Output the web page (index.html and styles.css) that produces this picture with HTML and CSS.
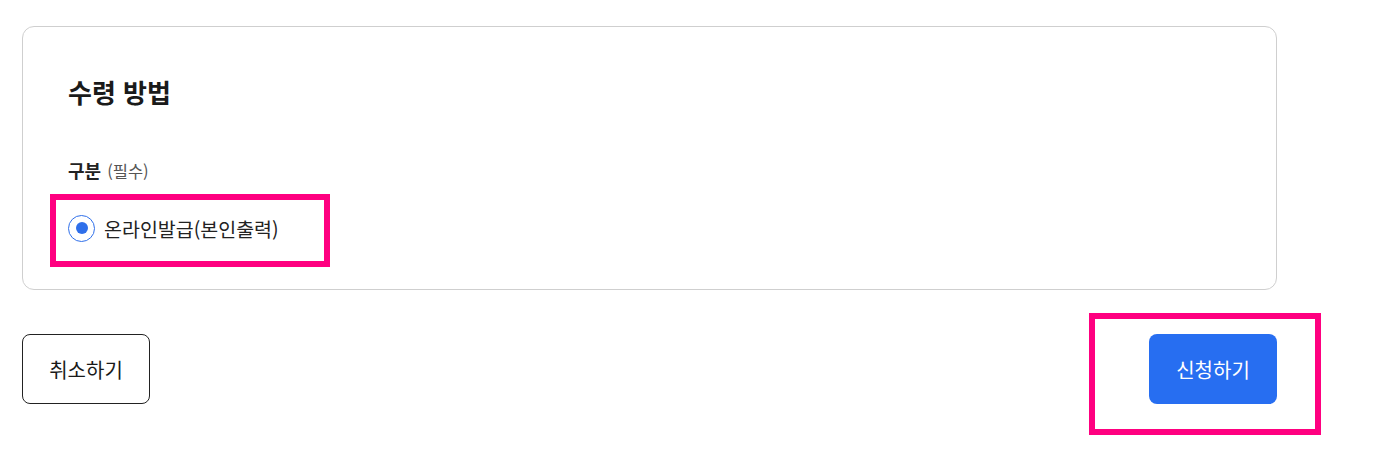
FILE: index.html
```html
<!DOCTYPE html>
<html lang="ko">
<head>
<meta charset="utf-8">
<link rel="stylesheet" href="styles.css">
</head>
<body>
<div class="page">
  <section class="card">
    <h2 class="card-title">수령 방법</h2>
    <div class="field-label">구분 <span class="req">(필수)</span></div>
    <div class="radio-wrap">
      <label class="radio">
        <span class="radio-circle"><span class="radio-dot"></span></span>
        <span class="radio-text">온라인발급(본인출력)</span>
      </label>
      <div class="mark mark-radio"></div>
    </div>
  </section>
  <div class="actions">
    <button class="btn btn-cancel">취소하기</button>
    <div class="submit-wrap">
      <button class="btn btn-submit">신청하기</button>
      <div class="mark mark-submit"></div>
    </div>
  </div>
</div>
</body>
</html>
```
FILE: styles.css
```css
* { box-sizing: border-box; }
html, body { margin: 0; padding: 0; background: #fff; }
body {
  font-family: "Noto Sans CJK KR", "Noto Sans", sans-serif;
  color: #1a1a1a;
  min-height: 463px;
}
.page {
  width: 1255px;
  margin-left: 22px;
  padding-top: 26px;
  padding-bottom: 40px;
}
.card {
  border: 1px solid #cfcfcf;
  border-radius: 12px;
  padding: 47px 45px 47px;
  display: flex;
  flex-direction: column;
  align-items: flex-start;
}
.card-title {
  margin: 0;
  font-size: 26px;
  line-height: 36px;
  font-weight: 700;
  color: #1a1a1a;
}
.field-label {
  margin-top: 47px;
  font-size: 18px;
  line-height: 26px;
  font-weight: 700;
  color: #222;
}
.req {
  font-size: 16.5px;
  font-weight: 400;
  color: #555;
  margin-left: 1px;
}
.radio-wrap {
  position: relative;
  margin-top: 30px;
}
.radio {
  display: flex;
  align-items: center;
  gap: 9px;
  height: 28px;
}
.radio-circle {
  width: 27px;
  height: 27px;
  border: 1.5px solid #2f6fea;
  border-radius: 50%;
  display: flex;
  align-items: center;
  justify-content: center;
}
.radio-dot {
  width: 12px;
  height: 12px;
  border-radius: 50%;
  background: #2f6fea;
}
.radio-text {
  font-size: 19.5px;
  color: #222;
}
.mark {
  position: absolute;
  border: 6px solid #ff0080;
  pointer-events: none;
}
.mark-radio {
  left: -18px;
  top: -20px;
  width: 280px;
  height: 73px;
}
.actions {
  margin-top: 44px;
  display: flex;
  justify-content: space-between;
  align-items: flex-start;
}
.btn {
  font-family: inherit;
  font-size: 20px;
  height: 70px;
  width: 128px;
  border-radius: 8px;
  cursor: pointer;
}
.btn-cancel {
  background: #fff;
  border: 1px solid #222;
  color: #1a1a1a;
}
.submit-wrap { position: relative; }
.btn-submit {
  background: #276ef1;
  border: none;
  color: #fff;
}
.mark-submit {
  left: -60px;
  top: -21px;
  width: 232px;
  height: 122px;
}
```
